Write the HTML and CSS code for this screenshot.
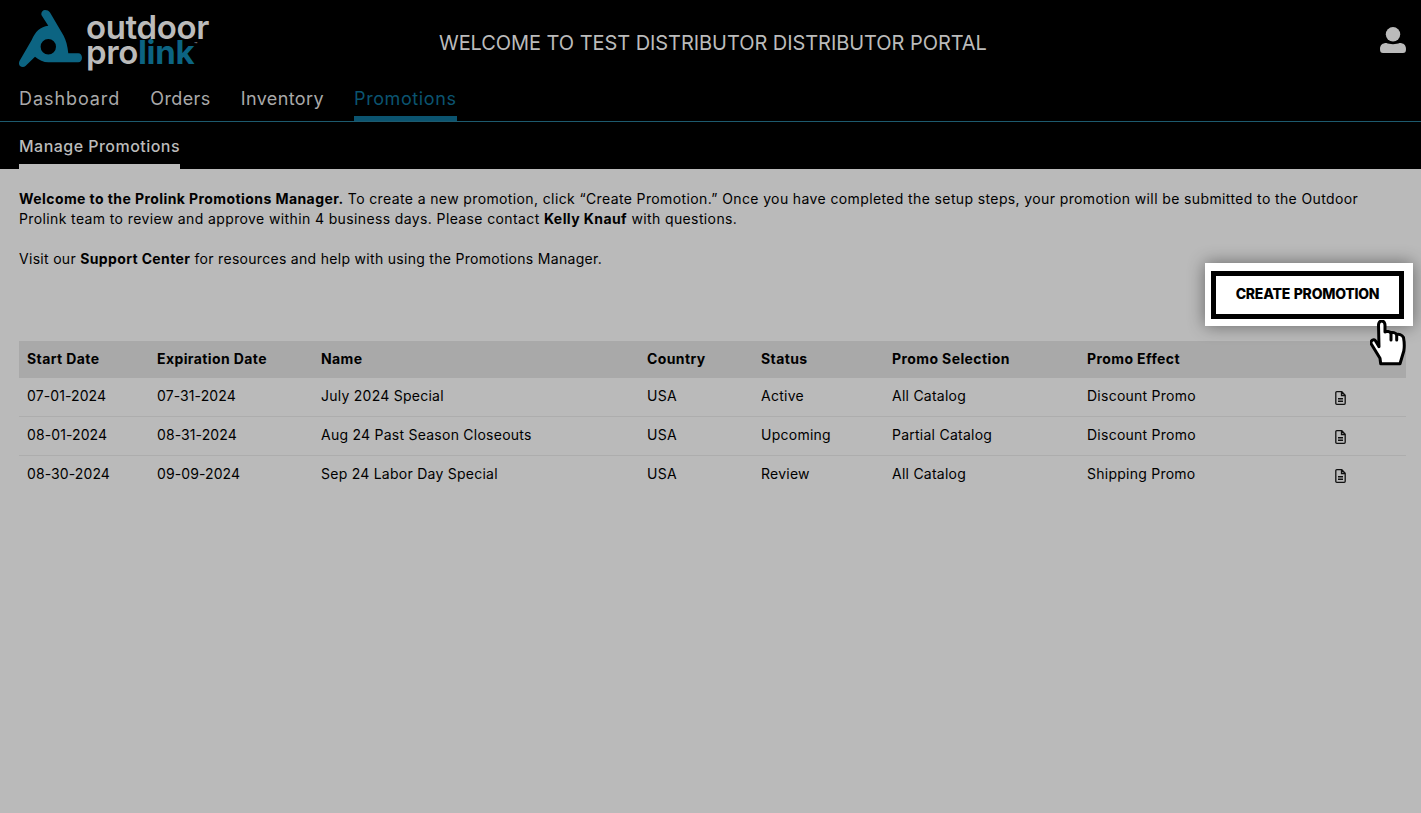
FILE: index.html
```html
<!DOCTYPE html>
<html lang="en">
<head>
<meta charset="utf-8">
<title>Promotions</title>
<link rel="stylesheet" href="styles.css">
</head>
<body>
<header class="top">
  <div class="brand-row">
    <a class="logo">
      <svg class="mark" viewBox="0 0 64 60" width="64" height="60" aria-hidden="true">
        <path class="mark-shape" fill-rule="evenodd" d="M22.700 5.500C21.400 3 23.500 0 26 0C28 0 30 .8 31 2.500L44.500 25.500C47 30 48.500 36 49.300 43.300H59.300C61.500 43.300 63 45.300 63 47.700C63 50.300 61.500 52.300 59.300 52.300H29.300C24.500 52.300 20 50 16 46.700L6.500 56C5 57.500 2.500 57.300 1 56C-.2 54.800-.3 52.800.5 51L12.700 30C14.500 26 16.500 22.500 19.300 20C22 17.800 25.500 16.200 29.300 15.700ZM29.300 29A7.700 7.700 0 1 0 29.300 44.400A7.700 7.700 0 1 0 29.300 29Z"/>
      </svg>
      <span class="wordmark"><span class="word-top">outdoor</span><span class="word-bottom">pro<b>link</b><i>™</i></span></span>
    </a>
    <h1 class="welcome">WELCOME TO TEST DISTRIBUTOR DISTRIBUTOR PORTAL</h1>
    <svg class="user" viewBox="0 0 26 26" width="26" height="26" aria-hidden="true">
      <circle cx="13" cy="7.300" r="7.200"/>
      <path d="M0 22C0 18 2.500 16 6.500 16C9 17.500 17 17.500 19.500 16C23.500 16 26 18 26 22C26 25 25 26 23 26H3C1 26 0 25 0 22Z"/>
    </svg>
  </div>
  <nav class="main-nav">
    <a>Dashboard</a>
    <a>Orders</a>
    <a>Inventory</a>
    <a class="active">Promotions</a>
  </nav>
  <nav class="sub-nav">
    <a class="active">Manage Promotions</a>
  </nav>
</header>
<main class="content">
  <p class="intro"><strong>Welcome to the Prolink Promotions Manager.</strong> To create a new promotion, click “Create Promotion.” Once you have completed the setup steps, your promotion will be submitted to the Outdoor Prolink team to review and approve within 4 business days. Please contact <strong>Kelly Knauf</strong> with questions.</p>
  <p class="intro intro-short">Visit our <strong>Support Center</strong> for resources and help with using the Promotions Manager.</p>
  <table class="promos">
    <thead>
      <tr><th class="c1">Start Date</th><th class="c2">Expiration Date</th><th class="c3">Name</th><th class="c4">Country</th><th class="c5">Status</th><th class="c6">Promo Selection</th><th class="c7">Promo Effect</th><th></th></tr>
    </thead>
    <tbody>
      <tr><td class="num">07-01-2024</td><td class="num">07-31-2024</td><td>July 2024 Special</td><td>USA</td><td>Active</td><td>All Catalog</td><td>Discount Promo</td><td class="doc"><svg viewBox="0 0 11 14" width="11" height="14"><path d="M.8 1.700A1 1 0 0 1 1.800.700H6.800L10.200 4.200V12.300A1 1 0 0 1 9.200 13.300H1.800A1 1 0 0 1 .8 12.300ZM6.500 1V4.500H10"/><path class="doc-lines" d="M3 7.800H8M3 10.300H8"/></svg></td></tr>
      <tr><td class="num">08-01-2024</td><td class="num">08-31-2024</td><td>Aug 24 Past Season Closeouts</td><td>USA</td><td>Upcoming</td><td>Partial Catalog</td><td>Discount Promo</td><td class="doc"><svg viewBox="0 0 11 14" width="11" height="14"><path d="M.8 1.700A1 1 0 0 1 1.800.700H6.800L10.200 4.200V12.300A1 1 0 0 1 9.200 13.300H1.800A1 1 0 0 1 .8 12.300ZM6.500 1V4.500H10"/><path class="doc-lines" d="M3 7.800H8M3 10.300H8"/></svg></td></tr>
      <tr><td class="num">08-30-2024</td><td class="num">09-09-2024</td><td>Sep 24 Labor Day Special</td><td>USA</td><td>Review</td><td>All Catalog</td><td>Shipping Promo</td><td class="doc"><svg viewBox="0 0 11 14" width="11" height="14"><path d="M.8 1.700A1 1 0 0 1 1.800.700H6.800L10.200 4.200V12.300A1 1 0 0 1 9.200 13.300H1.800A1 1 0 0 1 .8 12.300ZM6.500 1V4.500H10"/><path class="doc-lines" d="M3 7.800H8M3 10.300H8"/></svg></td></tr>
    </tbody>
  </table>
</main>
<div class="spotlight"><button class="create">CREATE PROMOTION</button></div>
<svg class="cursor" viewBox="0 0 36 46" width="36" height="46" aria-hidden="true">
  <path d="M11.700 1C9.800 1 8.500 2.800 8.500 5L9 26.700L5.300 20.500C3.500 18.800.5 20.800 1 23.500L10 38.300L10.700 43.800H30L33.800 31C34.500 27 34.300 22 33.500 17.500C32 14.500 28.500 13.800 26.700 14.500C25.500 12.500 22.500 12 21 13C19.800 11.500 16.500 11 15 12V5C15 2.800 13.700 1 11.700 1Z"/>
  <path d="M21 13V20M26.700 14.500V20"/>
</svg>
</body>
</html>
```
FILE: styles.css
```css
* { box-sizing: border-box; }
html, body { margin: 0; height: 100%; }
body {
  position: relative;
  min-height: 813px;
  overflow: hidden;
  background: #bababa;
  color: #000;
  font-family: "Inter", "Liberation Sans", sans-serif;
}
.top { background: #000; height: 169px; display: flex; flex-direction: column; }
.brand-row { height: 85px; display: flex; align-items: flex-start; padding: 0 15px 0 19px; }
.logo { display: flex; width: 420px; padding-top: 10px; }
.mark { flex: none; width: 64px; height: 60px; }
.mark-shape { fill: #0c6482; }
.wordmark { display: flex; flex-direction: column; margin: 5px 0 0 3px; font-weight: 600; font-size: 33px; line-height: 25px; color: #bbb; letter-spacing: -.35px; }
.word-bottom b { color: #0c6482; font-weight: 700; }
.word-bottom i { font-style: normal; font-size: 5px; line-height: 0; vertical-align: 18px; font-weight: 400; letter-spacing: 0; }
.welcome { flex: 1; margin: 30px 0 0; font-size: 20px; line-height: 26px; font-weight: 400; color: #bbb; letter-spacing: -.06px; }
.user { margin-top: 27px; fill: #bbb; }
.main-nav { height: 37px; display: flex; gap: 30px; padding: 0 19px; border-bottom: 1px solid #1d5a6e; }
.main-nav a { height: 36px; font-size: 18px; line-height: 28px; color: #a9a9a9; letter-spacing: .4px; }
.main-nav a:first-child { letter-spacing: .93px; }
.main-nav a.active { color: #0b5470; letter-spacing: .6px; border-bottom: 5px solid #0b5470; }
.sub-nav { flex: 1; display: flex; padding: 0 19px; }
.sub-nav a { height: 47px; padding-top: 11px; font-size: 16px; line-height: 26px; font-weight: 500; color: #bbb; letter-spacing: .47px; border-bottom: 5px solid #bbb; }
.content { padding: 20px 15px 0 19px; }
.intro { margin: 0 0 20px; max-width: 1345px; font-size: 14px; line-height: 20px; letter-spacing: .38px; }
.intro strong { font-weight: 700; letter-spacing: .42px; }
.intro-short { letter-spacing: .3px; }
.intro-short strong { letter-spacing: .36px; }
.promos { margin-top: 72px; width: 1387px; border-collapse: separate; border-spacing: 0; table-layout: fixed; font-size: 14px; letter-spacing: .25px; }
.promos th { height: 37px; background: #a9a9a9; text-align: left; padding: 0 8px 2px; font-weight: 700; letter-spacing: .4px; }
.promos td { height: 39px; padding: 0 8px 3px; border-bottom: 1px solid #adadad; }
.promos tr:last-child td { border-bottom-color: transparent; }
.promos td.num { letter-spacing: .1px; }
.c1 { width: 130px; }
.c2 { width: 164px; }
.c3 { width: 326px; }
.c4 { width: 114px; }
.c5 { width: 131px; }
.c6 { width: 195px; }
.c7 { width: 240px; }
.promos td.doc { padding: 2px 0 0 16px; }
.doc svg { display: block; fill: none; stroke: #111; stroke-width: 1.3; }
.doc-lines { stroke-width: 1.5; }
.spotlight { position: absolute; left: 1205px; top: 263px; width: 208px; height: 63px; padding: 8px 9px 7px 6px; background: #fff; box-shadow: 0 0 16px rgba(0,0,0,.45); }
.create { display: block; width: 100%; height: 48px; border: 5px solid #000; background: #fff; color: #000; font: 800 14px/34px "Inter", sans-serif; letter-spacing: -.25px; word-spacing: 1px; padding: 0 0 3px; }
.cursor { position: absolute; left: 1370px; top: 320px; fill: #fff; stroke: #000; stroke-width: 3; stroke-linejoin: round; stroke-linecap: round; }
```
